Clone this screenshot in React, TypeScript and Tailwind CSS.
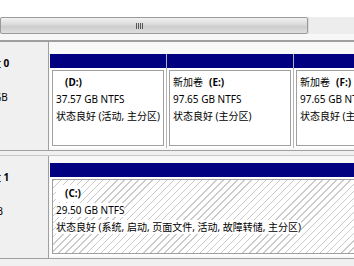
const font = { fontFamily: '"Noto Sans", "Noto Sans CJK SC", sans-serif' }

type Part = {
  name: string
  letter: string
  size: string
  status: string
  width: string
}

const disk0: Part[] = [
  { name: '', letter: '(D:)', size: '37.57 GB NTFS', status: '状态良好 (活动, 主分区)', width: 'w-[117px]' },
  { name: '新加卷', letter: '(E:)', size: '97.65 GB NTFS', status: '状态良好 (主分区)', width: 'w-[127px]' },
  { name: '新加卷', letter: '(F:)', size: '97.65 GB NTFS', status: '状态良好 (主分区)', width: 'w-[127px]' },
]

function Partition({ p, hatched }: { p: Part; hatched?: boolean }) {
  return (
    <div className={`${p.width} shrink-0 flex flex-col border-r border-[#b4b4b4] bg-white`}>
      <div className="h-[14px] bg-[#000080]" />
      <div
        className={`flex-1 m-[2px] border border-[#a0a0a0] pl-[3px] text-[10px] leading-[17px] text-black ${
          hatched
            ? 'pt-[5px] bg-[repeating-linear-gradient(135deg,#cacaca_0px,#cacaca_1px,#ffffff_1px,#ffffff_5px)]'
            : 'pt-[3px] bg-white'
        }`}
      >
        <div className="flex whitespace-nowrap">
          <span className="bg-white pr-[6px]">{p.name}</span>
          <span className={`bg-white font-bold ${p.name ? '' : 'pl-[3px]'}`}>{p.letter}</span>
        </div>
        <div className="whitespace-nowrap">
          <span className="bg-white">{p.size}</span>
        </div>
        <div className="whitespace-nowrap">
          <span className="bg-white">{p.status}</span>
        </div>
      </div>
    </div>
  )
}

function DiskLabel({ num, size, sizeShift }: { num: string; size: string; sizeShift: string }) {
  return (
    <div className="w-[49px] shrink-0 overflow-hidden border-r border-[#a0a0a0] bg-[#f0f0f0] pt-[13px] text-[10px] leading-[17px] text-black">
      <div className="ml-[-19px] whitespace-nowrap font-bold">磁盘 {num}</div>
      <div className="h-[17px]" />
      <div className={`${sizeShift} whitespace-nowrap`}>{size}</div>
    </div>
  )
}

export default function App() {
  return (
    <div className="w-[354px] h-[266px] overflow-hidden bg-[#f0f0f0]" style={font}>
      <div className="h-[17px] bg-white" />
      <div className="flex h-[17px] bg-[#ececec]">
        <div className="flex w-[308px] items-center justify-center rounded-[2px] border border-[#9a9a9a] bg-[linear-gradient(#f2f2f2,#d6d6d6_50%,#cacaca_51%,#dedede)]">
          <div className="ml-[-30px] flex gap-[1px]">
            <div className="h-[6px] w-[1px] bg-[#555]" />
            <div className="h-[6px] w-[1px] bg-[#555]" />
            <div className="h-[6px] w-[1px] bg-[#555]" />
            <div className="h-[6px] w-[1px] bg-[#555]" />
          </div>
        </div>
        <div className="flex-1 border-l border-[#dcdcdc] bg-[#ededed]" />
      </div>
      <div className="h-[6px] bg-[#f7f7f7]" />
      <div className="h-[2px] bg-[#9f9f9f]" />

      <div className="flex h-[109px] border-b border-[#a0a0a0] bg-[#f8f8f8]">
        <DiskLabel num="0" size="232.88 GB" sizeShift="ml-[-40px]" />
        <div className="flex flex-1 pl-[1px] pt-[12px] pb-[2px]">
          {disk0.map((p) => (
            <Partition key={p.letter} p={p} />
          ))}
        </div>
      </div>
      <div className="h-[5px] border-b border-[#c8c8c8] bg-[#f0f0f0]" />

      <div className="flex h-[103px] border-b border-[#a0a0a0] bg-[#f8f8f8]">
        <DiskLabel num="1" size="29.82 GB" sizeShift="ml-[-39px]" />
        <div className="flex flex-1 pl-[1px] pt-[7px] pb-[2px]">
          <Partition
            hatched
            p={{
              name: '',
              letter: '(C:)',
              size: '29.50 GB NTFS',
              status: '状态良好 (系统, 启动, 页面文件, 活动, 故障转储, 主分区)',
              width: 'w-[320px]',
            }}
          />
        </div>
      </div>
    </div>
  )
}
